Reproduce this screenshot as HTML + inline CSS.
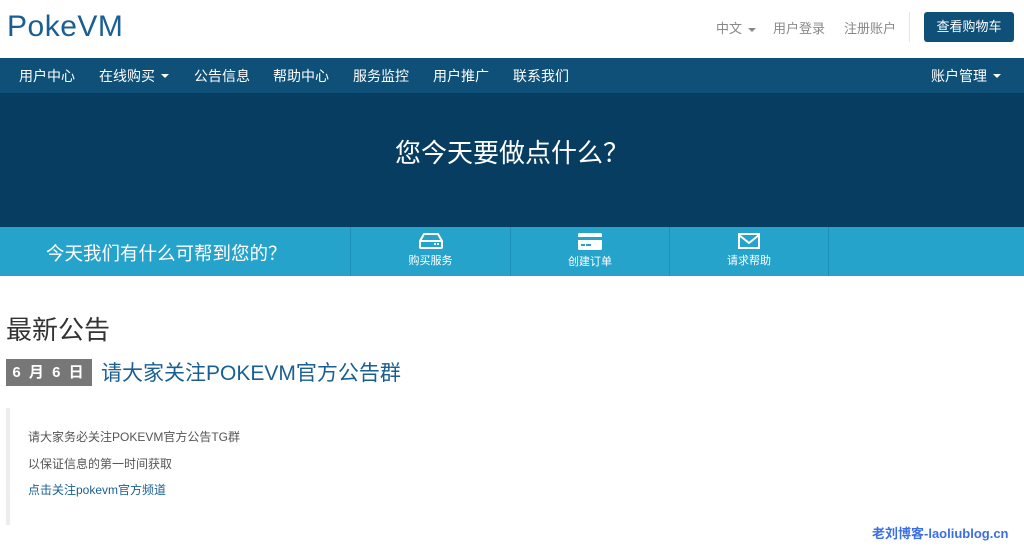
<!DOCTYPE html>
<html><head><meta charset="utf-8"><style>
*{margin:0;padding:0;box-sizing:border-box}
body{width:1024px;height:554px;overflow:hidden;background:#fff;font-family:"Liberation Sans","Noto Sans CJK SC",sans-serif;position:relative}
.abs{position:absolute;white-space:nowrap}
.nav{position:absolute;top:58px;left:0;width:1024px;height:35px;background:#0f5078}
.nav span{position:absolute;top:8px;color:#fff;font-size:14px}
.car{display:inline-block;width:0;height:0;border-left:4px solid transparent;border-right:4px solid transparent;border-top:4px solid currentColor;vertical-align:middle;margin-left:6px}
.hero{position:absolute;top:93px;left:0;width:1024px;height:134px;background:#063d60}
.bar{position:absolute;top:227px;left:0;width:1024px;height:49px;background:#25a3cb}
.cell{position:absolute;top:0;height:49px;border-left:1px solid #1e8fb6;color:#fff;font-size:11px;text-align:center}
.cell svg{display:block;margin:6px auto 3px}
</style></head><body>
<div class="abs" style="left:7px;top:10px;font-size:30px;color:#1a5f93;letter-spacing:0.5px">PokeVM</div>
<div class="abs" style="left:716px;top:18px;font-size:13px;color:#888">中文<span class="car"></span></div>
<div class="abs" style="left:773px;top:18px;font-size:13px;color:#888">用户登录</div>
<div class="abs" style="left:844px;top:18px;font-size:13px;color:#888">注册账户</div>
<div class="abs" style="left:909px;top:12px;width:1px;height:30px;background:#e6e6e6"></div>
<div class="abs" style="left:924px;top:12px;width:90px;height:30px;background:#0f5078;border-radius:3px;color:#fff;font-size:13px;text-align:center;line-height:30px">查看购物车</div>
<div class="nav">
<span style="left:19px">用户中心</span>
<span style="left:99px">在线购买<span class="car"></span></span>
<span style="left:194px">公告信息</span>
<span style="left:273px">帮助中心</span>
<span style="left:353px">服务监控</span>
<span style="left:433px">用户推广</span>
<span style="left:513px">联系我们</span>
<span style="left:931px">账户管理<span class="car"></span></span>
</div>
<div class="hero"><div class="abs" style="left:0;width:1024px;text-align:center;top:40px;color:#fff;font-size:26px">您今天要做点什么？</div></div>
<div class="bar">
<div class="abs" style="left:46px;top:13px;color:#fff;font-size:18.5px">今天我们有什么可帮到您的？</div>
<div class="cell" style="left:350px;width:160px"><svg width="24" height="16" viewBox="0 0 24 16"><path d="M5 1h14l4 7v6a1 1 0 0 1-1 1H2a1 1 0 0 1-1-1V8z M1 8h22" fill="none" stroke="#fff" stroke-width="2"/><rect x="15" y="10" width="2" height="2" fill="#fff"/><rect x="18" y="10" width="2" height="2" fill="#fff"/></svg>购买服务</div>
<div class="cell" style="left:510px;width:159px"><svg width="24" height="17" viewBox="0 0 24 17"><rect x="0" y="0" width="24" height="17" rx="1.5" fill="#fff"/><rect x="0" y="4" width="24" height="3" fill="#25a3cb"/><rect x="3" y="11" width="4" height="2" fill="#25a3cb"/><rect x="8" y="11" width="5" height="2" fill="#25a3cb"/></svg>创建订单</div>
<div class="cell" style="left:669px;width:159px"><svg width="22" height="16" viewBox="0 0 22 16"><rect x="1" y="1" width="20" height="14" fill="none" stroke="#fff" stroke-width="2"/><path d="M1 2l10 8 10-8" fill="none" stroke="#fff" stroke-width="2"/></svg>请求帮助</div>
<div class="cell" style="left:828px;width:196px"></div>
</div>
<div class="abs" style="left:6px;top:310px;font-size:26px;color:#333">最新公告</div>
<div class="abs" style="left:6px;top:359px;width:86px;height:27px;background:#777;color:#fff;font-weight:bold;font-size:15px;text-align:center;line-height:27px;letter-spacing:2px">6 月 6 日</div>
<div class="abs" style="left:101px;top:357px;font-size:21px;color:#1a5f93">请大家关注POKEVM官方公告群</div>
<div class="abs" style="left:6px;top:408px;width:4px;height:117px;background:#eee"></div>
<div class="abs" style="left:28px;top:428px;font-size:12px;color:#555">请大家务必关注POKEVM官方公告TG群</div>
<div class="abs" style="left:28px;top:455px;font-size:12px;color:#555">以保证信息的第一时间获取</div>
<div class="abs" style="left:28px;top:481px;font-size:12px;color:#1a5f93">点击关注pokevm官方频道</div>
<div class="abs" style="left:872px;top:523px;font-size:13px;color:#3a6ee8;font-weight:bold">老刘博客-laoliublog.cn</div>
</body></html>
